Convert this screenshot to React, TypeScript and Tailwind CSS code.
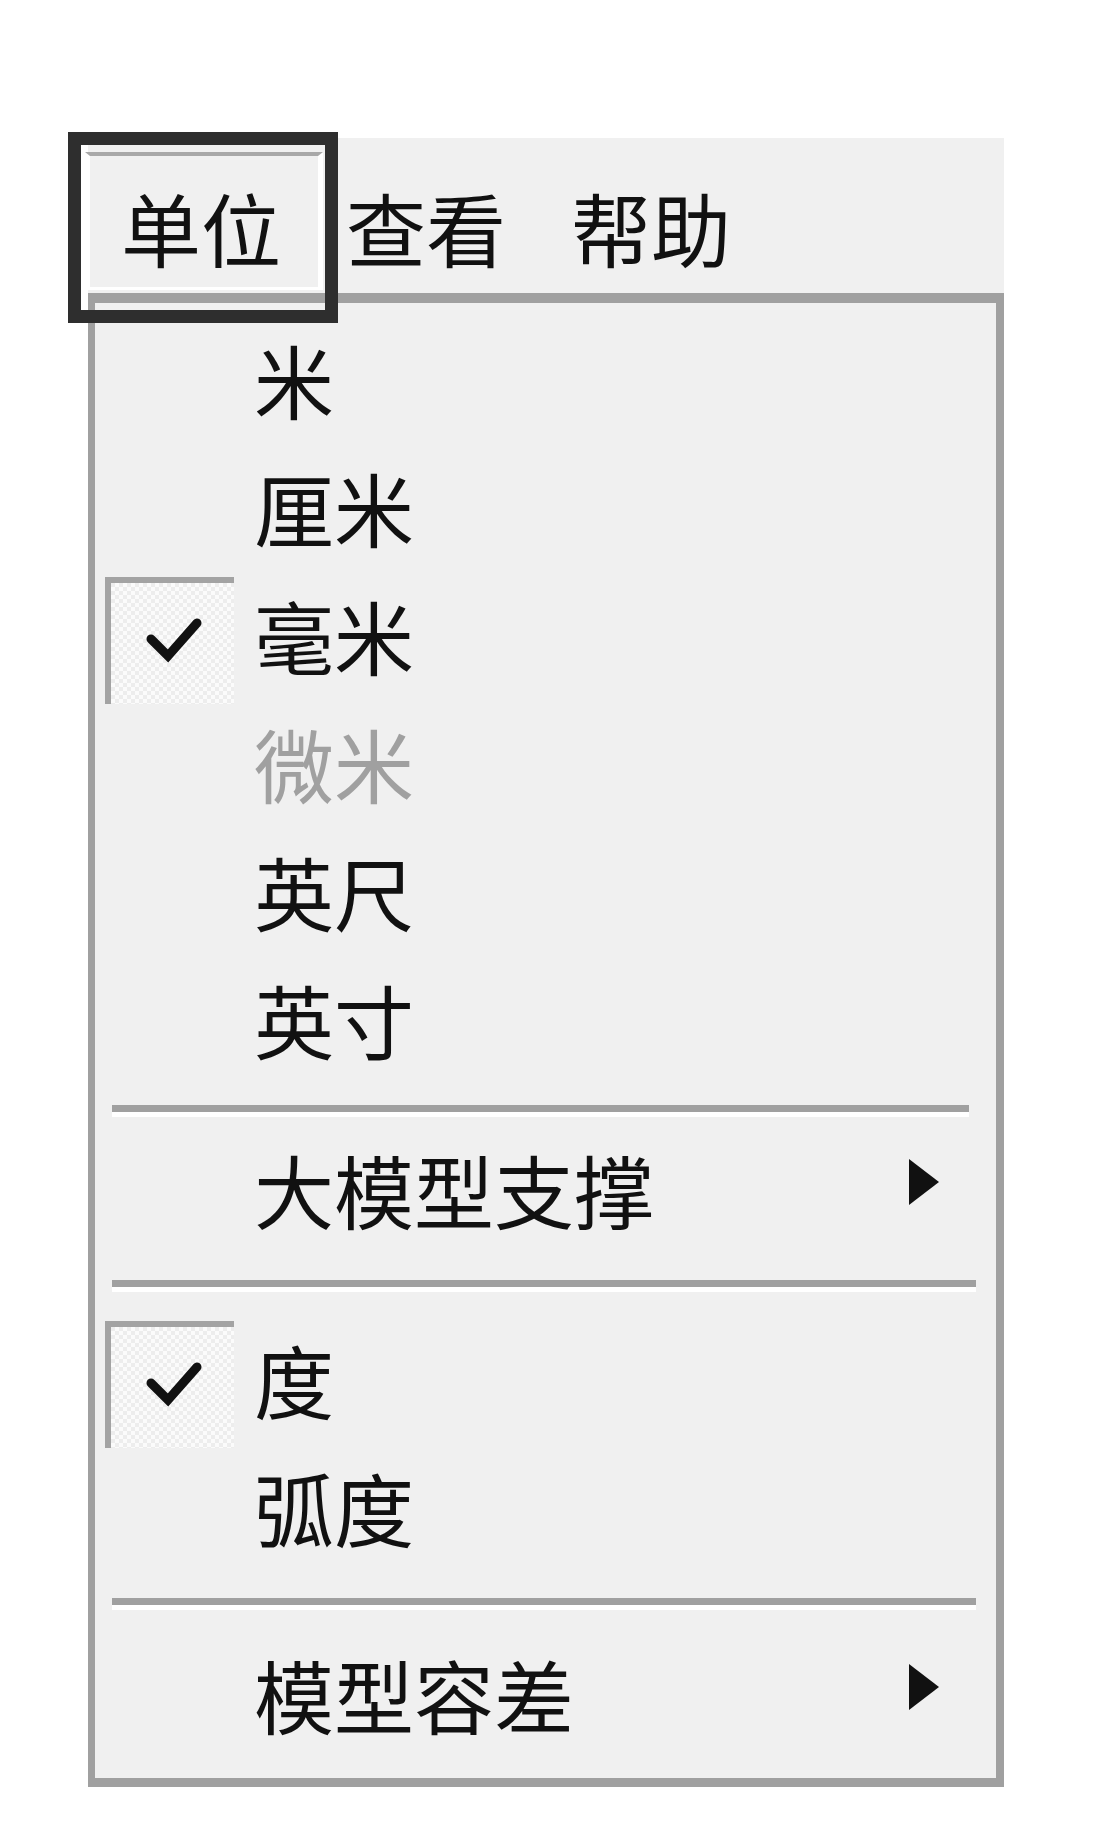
import React from "react";

const Check = () => (
  <div className="ml-[10px] w-[129px] h-[127px] border-t-[6px] border-l-[6px] border-[#a3a3a3] bg-[repeating-conic-gradient(#fbfbfb_0_25%,#ededed_0_50%)] bg-[length:8px_8px] relative">
    <svg className="absolute left-0 top-0" width="123" height="121" viewBox="0 0 123 121">
      <polyline points="40,56 57,73 86,40" fill="none" stroke="#111" strokeWidth="9" strokeLinejoin="miter" strokeLinecap="round" />
    </svg>
  </div>
);

const Arrow = () => (
  <svg className="ml-auto mr-[57px] mb-[25px]" width="30" height="46" viewBox="0 0 30 46">
    <polygon points="0,0 30,23 0,46" fill="#111" />
  </svg>
);

function Row({ label, checked, disabled, submenu }: { label: string; checked?: boolean; disabled?: boolean; submenu?: boolean }) {
  return (
    <div className="flex items-center h-[128px]">
      <div className="w-[159px] h-full flex items-center">{checked ? <Check /> : null}</div>
      <span className={disabled ? "text-[#a0a0a0] leading-none mb-[12px]" : "text-[#111] leading-none mb-[12px]"}>{label}</span>
      {submenu ? <Arrow /> : null}
    </div>
  );
}

function Sep({ h, pt, mr }: { h: string; pt: string; mr: string }) {
  return (
    <div className={`${h} ${pt}`}>
      <div className={`ml-[17px] ${mr} h-[7px] bg-[#a0a0a0]`} />
      <div className={`ml-[17px] ${mr} h-[5px] bg-white`} />
    </div>
  );
}

export default function App() {
  return (
    <div className="w-[1100px] h-[1834px] bg-white font-['Noto_Sans_CJK_SC','Noto_Sans_CJK_JP',sans-serif] text-[80px]">
      <div className="pt-[138px] pl-[88px]">
        <div className="w-[916px]">
          {/* menubar */}
          <div className="relative h-[155px] bg-[#f0f0f0] flex items-center pl-[33px] gap-[65px] pt-[20px] text-[#111] leading-none">
            <span>单位</span>
            <span>查看</span>
            <span>帮助</span>
            <div className="absolute left-[-20px] top-[-6px] w-[270px] h-[191px] border-[13px] border-[#2e2e2e]">
              <div className="absolute left-[4px] top-[7px] w-[238px] h-[138px] border-t-[4px] border-t-[#a8a8a8] border-l-[5px] border-l-white border-r-[5px] border-r-white border-b-[3px] border-b-white" />
            </div>
          </div>
          {/* dropdown */}
          <div className="bg-[#f0f0f0] border-[#a0a0a0] border-t-[10px] border-l-[7px] border-r-[8px] border-b-[9px] pt-[17px] pb-[15px]">
            <Row label="米" />
            <Row label="厘米" />
            <Row label="毫米" checked />
            <Row label="微米" disabled />
            <Row label="英尺" />
            <Row label="英寸" />
            <Sep h="h-[42px]" pt="pt-[17px]" mr="mr-[27px]" />
            <Row label="大模型支撑" submenu />
            <Sep h="h-[62px]" pt="pt-[22px]" mr="mr-[20px]" />
            <Row label="度" checked />
            <Row label="弧度" />
            <Sep h="h-[59px]" pt="pt-[22px]" mr="mr-[20px]" />
            <Row label="模型容差" submenu />
          </div>
        </div>
      </div>
    </div>
  );
}
